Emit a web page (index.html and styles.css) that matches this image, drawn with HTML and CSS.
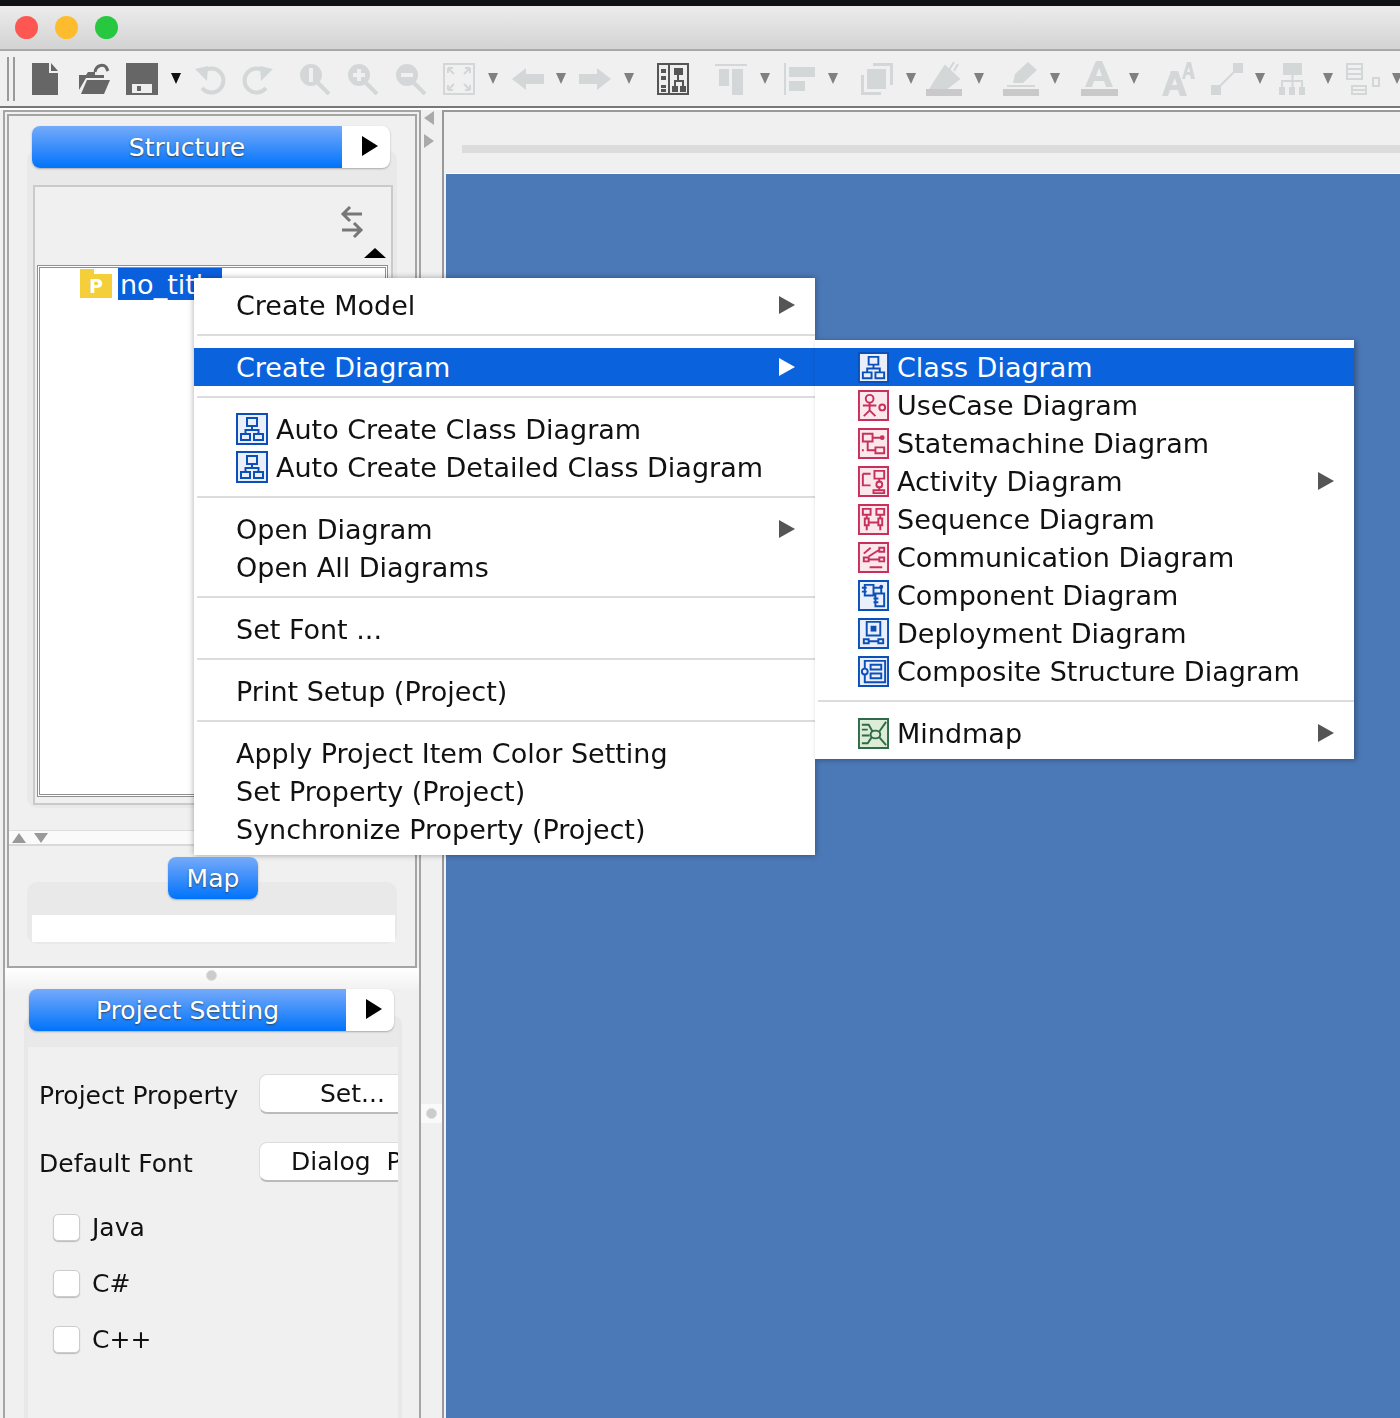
FILE: index.html
```html
<!DOCTYPE html>
<html lang="en">
<head>
    <meta charset="UTF-8">
    <title>astah - no_title</title>
    <link rel="stylesheet" href="styles.css">
</head>
<body>

    <!-- shared icons -->
    <svg class="defs" xmlns="http://www.w3.org/2000/svg">
        <symbol id="i-doc" viewBox="0 0 26 32"><path d="M0 0h17v10h9v22H0zM19 0l7 8h-7z" fill="#666"/></symbol>
        <symbol id="i-open" viewBox="0 0 32 32"><path d="M1 27V12h7l2-3h7v3h9v3H8zM3 31l6-14h23l-6 14z" fill="#666"/><path d="M17 9c1-7 8-8 11-5l2 4" fill="none" stroke="#666" stroke-width="3"/></symbol>
        <symbol id="i-save" viewBox="0 0 32 32"><path d="M0 0h32v32H0z" fill="#666"/><path d="M6 21h20v9H6z" fill="#eee"/><path d="M11 23h4v5h-4z" fill="#666"/></symbol>
        <symbol id="i-undo" viewBox="0 0 32 32"><path d="M9 9a12 12 0 1 1-1 16" fill="none" stroke="#d3d7d7" stroke-width="4"/><path d="M1 6l13-3-1 15z" fill="#d3d7d7"/></symbol>
        <symbol id="i-redo" viewBox="0 0 32 32"><path d="M23 9a12 12 0 1 0 1 16" fill="none" stroke="#d3d7d7" stroke-width="4"/><path d="M31 6L18 3l1 15z" fill="#d3d7d7"/></symbol>
        <symbol id="i-zoom1" viewBox="0 0 32 32"><circle cx="12" cy="12" r="11" fill="#d3d7d7"/><path d="M19 20l11 11" stroke="#d3d7d7" stroke-width="4"/><path d="M10 5h4v14h-4z" fill="#f0f0f0"/></symbol>
        <symbol id="i-zoom2" viewBox="0 0 32 32"><circle cx="12" cy="12" r="11" fill="#d3d7d7"/><path d="M19 20l11 11" stroke="#d3d7d7" stroke-width="4"/><path d="M10 6h4v4h4v4h-4v4h-4v-4H6v-4h4z" fill="#f0f0f0"/></symbol>
        <symbol id="i-zoom3" viewBox="0 0 32 32"><circle cx="12" cy="12" r="11" fill="#d3d7d7"/><path d="M19 20l11 11" stroke="#d3d7d7" stroke-width="4"/><path d="M6 10h12v4H6z" fill="#f0f0f0"/></symbol>
        <symbol id="i-fit" viewBox="0 0 32 32"><path d="M1 1h30v30H1z" fill="none" stroke="#d3d7d7" stroke-width="2"/><path d="M5 5l6 6M5 5v5M5 5h5M27 5l-6 6M27 5v5M27 5h-5M5 27l6-6M5 27v-5M5 27h5M27 27l-6-6M27 27v-5M27 27h-5" stroke="#d3d7d7" stroke-width="2" fill="none"/></symbol>
        <symbol id="i-back" viewBox="0 0 32 22"><path d="M0 11L14 0v6h18v10H14v6z" fill="#d3d7d7"/></symbol>
        <symbol id="i-fwd" viewBox="0 0 32 22"><path d="M32 11L18 0v6H0v10h18v6z" fill="#d3d7d7"/></symbol>
        <symbol id="i-map" viewBox="0 0 32 32"><path d="M1 1h30v30H1z" fill="#eee" stroke="#555" stroke-width="2"/><path d="M12 2v28" stroke="#555" stroke-width="2"/><path d="M4 6h5v4H4zM4 13h5v4H4zM4 22h5v3H4zM4 26h5v3H4zM17 5h9v7h-9zM15 23h6v6h-6zM23 23h6v6h-6z" fill="#555"/><path d="M21 12v6M18 23v-5h8v5" fill="none" stroke="#555" stroke-width="2"/></symbol>
        <symbol id="i-atop" viewBox="0 0 32 32"><path d="M0 1h32v2H0zM4 6h10v17H4zM17 6h11v26H17z" fill="#d3d7d7"/></symbol>
        <symbol id="i-aleft" viewBox="0 0 32 32"><path d="M0 0h2v32H0zM5 4h26v10H5zM5 18h16v10H5z" fill="#d3d7d7"/></symbol>
        <symbol id="i-layers" viewBox="0 0 32 32"><path d="M12 0h20v22h-3V3H12zM6 6h19v20H6zM0 12h3v17h17v3H0z" fill="#d3d7d7"/></symbol>
        <symbol id="i-fill" viewBox="0 0 38 36"><path d="M1 28h36v7H1z" fill="#c9c9c9"/><path d="M9 22L20 5l14 13-12 9H6zM24 9l5-8M29 10l4-7" fill="#d3d7d7" stroke="#d3d7d7" stroke-width="2"/></symbol>
        <symbol id="i-pen" viewBox="0 0 38 36"><path d="M1 28h36v7H1z" fill="#c9c9c9"/><path d="M5 25h28" stroke="#d3d7d7" stroke-width="2"/><path d="M11 22l2-9L26 1l9 8-14 13z" fill="#d3d7d7"/></symbol>
        <symbol id="i-a" viewBox="0 0 38 36"><path d="M1 28h37v7H1z" fill="#c9c9c9"/><path d="M5 26L16 0h6l11 26h-7l-2-6H14l-2 6zM16 15h6l-3-8z" fill="#d3d7d7" fill-rule="evenodd"/></symbol>
        <symbol id="i-aa" viewBox="0 0 33 34"><path d="M0 34L9 9h7l9 25h-7l-2-6H8l-2 6zM10 23h5l-2-7z" fill="#d3d7d7" fill-rule="evenodd"/><path d="M20 17L25 0h4l4 17h-4l-1-4h-4l-1 4zM25 10h3l-1-5z" fill="#d3d7d7" fill-rule="evenodd"/></symbol>
        <symbol id="i-line" viewBox="0 0 32 32"><path d="M22 0h10v10H22zM0 22h10v10H0z" fill="#d3d7d7"/><path d="M8 24L24 8" stroke="#d3d7d7" stroke-width="2"/></symbol>
        <symbol id="i-tree" viewBox="0 0 28 32"><path d="M4 0h19v12H4zM0 24h6v8H0zM10 24h6v8h-6zM20 24h6v8h-6z" fill="#d3d7d7"/><path d="M13.500 12v12M3 24v-6h20v6" fill="none" stroke="#d3d7d7" stroke-width="2"/></symbol>
        <symbol id="i-boxes" viewBox="0 0 34 32"><path d="M1 1h15v15H1zM6 23h14v8H6zM27 15h6v8h-6z" fill="none" stroke="#d3d7d7" stroke-width="2"/><path d="M1 6h15M1 11h15M6 27h14" stroke="#d3d7d7" stroke-width="2"/></symbol>
        <symbol id="i-swap" viewBox="0 0 24 32"><path d="M22 8H3M10 1L3 8l7 7M2 24h19M14 17l7 7-7 7" fill="none" stroke="#777" stroke-width="3"/></symbol>

        <symbol id="d-class" viewBox="0 0 32 32"><path d="M1 1h30v30H1z" fill="#e9f0fb" stroke="#0d4fb8" stroke-width="2"/><path d="M11 5h10v8H11zM5 21h9v6H5zM18 21h9v6h-9zM16 13v4M9.500 21v-4h13v4" fill="none" stroke="#0d4fb8" stroke-width="2"/></symbol>
        <symbol id="d-usecase" viewBox="0 0 32 32"><path d="M1 1h30v30H1z" fill="#fbe8ed" stroke="#c8305c" stroke-width="2"/><circle cx="12" cy="9" r="4" fill="none" stroke="#c8305c" stroke-width="2"/><path d="M12 13v8M5 16h14M12 21l-6 6M12 21l6 6" fill="none" stroke="#c8305c" stroke-width="2"/><circle cx="25" cy="18" r="3" fill="none" stroke="#c8305c" stroke-width="2"/></symbol>
        <symbol id="d-state" viewBox="0 0 32 32"><path d="M1 1h30v30H1z" fill="#fbe8ed" stroke="#c8305c" stroke-width="2"/><path d="M5 6h10v8H5zM18 20h9v6h-9zM15 10h10M10 14v9h8M4 23h2" fill="none" stroke="#c8305c" stroke-width="2"/><circle cx="25" cy="10" r="2.500" fill="#c8305c"/></symbol>
        <symbol id="d-activity" viewBox="0 0 32 32"><path d="M1 1h30v30H1z" fill="#fbe8ed" stroke="#c8305c" stroke-width="2"/><path d="M5 8h8M5 8v12h8M17 5h10v8H17zM22 13v4M16 25h11v3H16zM22 22v3" fill="none" stroke="#c8305c" stroke-width="2"/><circle cx="22" cy="19" r="3" fill="none" stroke="#c8305c" stroke-width="2"/></symbol>
        <symbol id="d-seq" viewBox="0 0 32 32"><path d="M1 1h30v30H1z" fill="#fbe8ed" stroke="#c8305c" stroke-width="2"/><path d="M5 5h8v6H5zM19 5h8v6h-8zM9 11v16M23 11v16M9 19h14" fill="none" stroke="#c8305c" stroke-width="2"/><path d="M7 15h4v7H7zM21 15h4v7h-4z" fill="#fbe8ed" stroke="#c8305c" stroke-width="2"/></symbol>
        <symbol id="d-comm" viewBox="0 0 32 32"><path d="M1 1h30v30H1z" fill="#fbe8ed" stroke="#c8305c" stroke-width="2"/><path d="M6 16h5v4H6zM22 6h5v4h-5zM22 16h5v4h-5zM11 15l11-7M11 18h11M12 26h13M6 12l7-6" fill="none" stroke="#c8305c" stroke-width="2"/></symbol>
        <symbol id="d-comp" viewBox="0 0 32 32"><path d="M1 1h30v30H1z" fill="#e9f0fb" stroke="#0d4fb8" stroke-width="2"/><path d="M7 5h9v11H7zM18 14h9v13h-9zM4 8h5M4 12h5M16 23h5M16 19h5M16 8h8v6" fill="none" stroke="#0d4fb8" stroke-width="2"/><circle cx="24" cy="7" r="2" fill="#0d4fb8"/></symbol>
        <symbol id="d-deploy" viewBox="0 0 32 32"><path d="M1 1h30v30H1z" fill="#e9f0fb" stroke="#0d4fb8" stroke-width="2"/><path d="M9 4h14v14H9zM6 22h5v4H6zM21 22h5v4h-5zM11 24h10" fill="none" stroke="#0d4fb8" stroke-width="2"/><path d="M13 8h6v6h-6z" fill="#0d4fb8"/></symbol>
        <symbol id="d-composite" viewBox="0 0 32 32"><path d="M1 1h30v30H1z" fill="#e9f0fb" stroke="#0d4fb8" stroke-width="2"/><path d="M7 5h21v22H7zM13 9h11v5H13zM13 18h11v5H13z" fill="none" stroke="#0d4fb8" stroke-width="2"/><circle cx="7" cy="16" r="3" fill="#e9f0fb" stroke="#0d4fb8" stroke-width="2"/></symbol>
        <symbol id="d-mind" viewBox="0 0 32 32"><path d="M1 1h30v30H1z" fill="#dcecd5" stroke="#2f6b4a" stroke-width="2"/><ellipse cx="18" cy="17" rx="5" ry="4" fill="#dcecd5" stroke="#2f6b4a" stroke-width="2"/><path d="M4 7h7l4 7M4 12h6M4 26h6l4-6M22 14l7-10M22 20l7 8M4 18h8" fill="none" stroke="#2f6b4a" stroke-width="2"/></symbol>
    </svg>

    <div class="top-edge"></div>

    <!-- window title bar -->
    <div class="titlebar">
        <span class="light red"></span>
        <span class="light amber"></span>
        <span class="light green"></span>
    </div>

    <!-- toolbar -->
    <div class="toolbar">
        <span class="grip"></span>
        <svg class="ic w26 m17"><use href="#i-doc"/></svg>
        <svg class="ic m20"><use href="#i-open"/></svg>
        <svg class="ic m16"><use href="#i-save"/></svg>
        <span class="drop dark m13"></span>
        <svg class="ic m13"><use href="#i-undo"/></svg>
        <svg class="ic m16"><use href="#i-redo"/></svg>
        <svg class="ic m25"><use href="#i-zoom1"/></svg>
        <svg class="ic m16"><use href="#i-zoom2"/></svg>
        <svg class="ic m16"><use href="#i-zoom3"/></svg>
        <svg class="ic m16"><use href="#i-fit"/></svg>
        <span class="drop m13"></span>
        <svg class="ic short m14"><use href="#i-back"/></svg>
        <span class="drop m12"></span>
        <svg class="ic short m13"><use href="#i-fwd"/></svg>
        <span class="drop m13"></span>
        <svg class="ic m23"><use href="#i-map"/></svg>
        <svg class="ic m26"><use href="#i-atop"/></svg>
        <span class="drop m13"></span>
        <svg class="ic m14"><use href="#i-aleft"/></svg>
        <span class="drop m12"></span>
        <svg class="ic m23"><use href="#i-layers"/></svg>
        <span class="drop m13"></span>
        <svg class="ic w38 m9"><use href="#i-fill"/></svg>
        <span class="drop m11"></span>
        <svg class="ic w38 m18"><use href="#i-pen"/></svg>
        <span class="drop m10"></span>
        <svg class="ic w38 m20"><use href="#i-a"/></svg>
        <span class="drop m11"></span>
        <svg class="ic w33 m23"><use href="#i-aa"/></svg>
        <svg class="ic m16"><use href="#i-line"/></svg>
        <span class="drop m12"></span>
        <svg class="ic w28 m14"><use href="#i-tree"/></svg>
        <span class="drop m16"></span>
        <svg class="ic w34 m13"><use href="#i-boxes"/></svg>
        <span class="drop m12"></span>
    </div>
    <div class="toolbar-rule"></div>

    <div class="workspace">

        <!-- left side panes -->
        <div class="side">
            <div class="upper">
                <div class="tab tab-structure">
                    <span class="tab-label">Structure</span>
                    <span class="tab-play"></span>
                </div>
                <div class="group group-structure">
                    <div class="tree-wrap">
                        <div class="tree-head">
                            <svg class="swap"><use href="#i-swap"/></svg>
                            <span class="collapse"></span>
                        </div>
                        <div class="tree">
                            <div class="tree-row">
                                <span class="pkg"><span class="pkg-tab"></span>P</span>
                                <span class="tree-name">no_title</span>
                            </div>
                        </div>
                    </div>
                </div>
                <div class="split-h">
                    <span class="mini up"></span>
                    <span class="mini down"></span>
                </div>
                <div class="tab tab-map"><span class="tab-label">Map</span></div>
                <div class="group group-map"><div class="map-view"></div></div>
            </div>

            <div class="split-dot"><span class="dot"></span></div>

            <div class="tab tab-project">
                <span class="tab-label">Project Setting</span>
                <span class="tab-play"></span>
            </div>
            <div class="group group-project">
                <div class="prop-row">
                    <span class="prop-label">Project Property</span>
                    <span class="prop-btn btn-set">Set...</span>
                </div>
                <div class="prop-row">
                    <span class="prop-label">Default Font</span>
                    <span class="prop-btn btn-font">Dialog&nbsp;&nbsp;Plain</span>
                </div>
                <label class="check"><span class="box"></span>Java</label>
                <label class="check"><span class="box"></span>C#</label>
                <label class="check"><span class="box"></span>C++</label>
            </div>
        </div>

        <!-- divider between side panes and the diagram -->
        <div class="divider">
            <span class="mini left"></span>
            <span class="mini right"></span>
            <div class="divider-dot"><span class="dot"></span></div>
        </div>

        <!-- diagram editor -->
        <div class="editor">
            <div class="editor-tabs"><div class="tab-track"></div></div>
            <div class="canvas"></div>
        </div>
    </div>

    <!-- context menu -->
    <div class="menu menu-main">
        <div class="item has-sub">Create Model</div>
        <div class="sep"></div>
        <div class="item has-sub active">Create Diagram</div>
        <div class="sep"></div>
        <div class="item with-icon"><svg class="d-ic"><use href="#d-class"/></svg>Auto Create Class Diagram</div>
        <div class="item with-icon"><svg class="d-ic"><use href="#d-class"/></svg>Auto Create Detailed Class Diagram</div>
        <div class="sep"></div>
        <div class="item has-sub">Open Diagram</div>
        <div class="item">Open All Diagrams</div>
        <div class="sep"></div>
        <div class="item">Set Font ...</div>
        <div class="sep"></div>
        <div class="item">Print Setup (Project)</div>
        <div class="sep"></div>
        <div class="item">Apply Project Item Color Setting</div>
        <div class="item">Set Property (Project)</div>
        <div class="item">Synchronize Property (Project)</div>
    </div>

    <!-- Create Diagram submenu -->
    <div class="menu menu-sub">
        <div class="item active"><svg class="d-ic"><use href="#d-class"/></svg>Class Diagram</div>
        <div class="item"><svg class="d-ic"><use href="#d-usecase"/></svg>UseCase Diagram</div>
        <div class="item"><svg class="d-ic"><use href="#d-state"/></svg>Statemachine Diagram</div>
        <div class="item has-sub"><svg class="d-ic"><use href="#d-activity"/></svg>Activity Diagram</div>
        <div class="item"><svg class="d-ic"><use href="#d-seq"/></svg>Sequence Diagram</div>
        <div class="item"><svg class="d-ic"><use href="#d-comm"/></svg>Communication Diagram</div>
        <div class="item"><svg class="d-ic"><use href="#d-comp"/></svg>Component Diagram</div>
        <div class="item"><svg class="d-ic"><use href="#d-deploy"/></svg>Deployment Diagram</div>
        <div class="item"><svg class="d-ic"><use href="#d-composite"/></svg>Composite Structure Diagram</div>
        <div class="sep"></div>
        <div class="item has-sub"><svg class="d-ic"><use href="#d-mind"/></svg>Mindmap</div>
    </div>

</body>
</html>
```

FILE: styles.css
```css
/* whole window */
html, body {
    margin: 0;
    height: 1418px;
    overflow: hidden;
}

body {
    position: relative;
    background-color: #f0f0f0;
    font-family: "DejaVu Sans", sans-serif;
    font-size: 27px;
    color: #111;
    filter: blur(0.4px);
}

.defs {
    display: none;
}

.top-edge {
    height: 6px;
    background-color: #101114;
}

/* title bar with the three window lights */
.titlebar {
    height: 43px;
    display: flex;
    align-items: center;
    gap: 17px;
    padding-left: 15px;
    background: linear-gradient(#ececec, #d3d3d3);
    border-bottom: 2px solid #a8a8a8;
}

.light {
    width: 23px;
    height: 23px;
    border-radius: 50%;
}

.red { background-color: #fd5752; }
.amber { background-color: #fdbc2e; }
.green { background-color: #27c83f; }

/* toolbar */
.toolbar {
    height: 55px;
    display: flex;
    align-items: center;
    padding-left: 7px;
}

.grip {
    width: 4px;
    height: 44px;
    flex: none;
    border-left: 2px solid #9a9a9a;
    border-right: 2px solid #9a9a9a;
}

.ic {
    width: 32px;
    height: 32px;
    flex: none;
}

.ic.short { height: 22px; }
.ic.w26 { width: 26px; }
.ic.w28 { width: 28px; }
.ic.w33 { width: 33px; height: 34px; }
.ic.w34 { width: 34px; }
.ic.w38 { width: 38px; height: 36px; }

.drop {
    width: 0;
    height: 0;
    flex: none;
    border-left: 5px solid transparent;
    border-right: 5px solid transparent;
    border-top: 11px solid #808080;
}

.drop.dark { border-top-color: #111; }

.m9 { margin-left: 9px; }
.m10 { margin-left: 10px; }
.m11 { margin-left: 11px; }
.m12 { margin-left: 12px; }
.m13 { margin-left: 13px; }
.m14 { margin-left: 14px; }
.m16 { margin-left: 16px; }
.m17 { margin-left: 17px; }
.m18 { margin-left: 18px; }
.m20 { margin-left: 20px; }
.m23 { margin-left: 23px; }
.m25 { margin-left: 25px; }
.m26 { margin-left: 26px; }

.toolbar-rule {
    height: 2px;
    background-color: #777;
    border-bottom: 2px solid #fff;
}

.workspace {
    display: flex;
    height: 1308px;
}

/* left side panes */
.side {
    width: 414px;
    margin-left: 3px;
    flex: none;
    border: 2px solid #a5a5a5;
    border-bottom: none;
}

.upper {
    height: 840px;
    margin: 2px 0 0 2px;
    width: 406px;
    padding-top: 10px;
    border: 2px solid #a5a5a5;
    box-sizing: content-box;
}

/* blue pill title with white play part */
.tab {
    position: relative;
    z-index: 1;
    display: flex;
    height: 42px;
    color: #fff;
    font-size: 25px;
    border-radius: 8px;
    box-shadow: 0 1px 2px #aaa;
    overflow: hidden;
    background-color: #fff;
}

.tab-label {
    flex: 1;
    text-align: center;
    line-height: 43px;
    text-shadow: 0 1px 2px #345;
    background: linear-gradient(#75aafa, #0073fb);
}

.tab-play {
    width: 48px;
    position: relative;
}

.tab-play::after {
    content: "";
    position: absolute;
    left: 20px;
    top: 10px;
    border-left: 16px solid #000;
    border-top: 10px solid transparent;
    border-bottom: 10px solid transparent;
}

.tab-structure {
    width: 358px;
    margin-left: 23px;
}

.tab-map {
    width: 90px;
    margin: 11px 0 0 159px;
}

.tab-project {
    width: 365px;
    margin: 0 0 0 24px;
}

/* rounded group boxes under each tab */
.group {
    background-color: #e9e9e9;
    border-radius: 10px;
}

.group-structure {
    width: 370px;
    height: 658px;
    margin: -18px 0 0 18px;
    padding-top: 35px;
    box-sizing: border-box;
}

.tree-wrap {
    margin-left: 6px;
    width: 360px;
    height: 620px;
    box-sizing: border-box;
    border: 2px solid #cacaca;
    background-color: #f0f0f0;
}

.tree-head {
    position: relative;
    height: 78px;
}

.swap {
    position: absolute;
    left: 305px;
    top: 19px;
    width: 24px;
    height: 32px;
}

.collapse {
    position: absolute;
    left: 329px;
    top: 61px;
    border-bottom: 10px solid #000;
    border-left: 11px solid transparent;
    border-right: 11px solid transparent;
}

.tree {
    margin-left: 2px;
    width: 351px;
    height: 532px;
    box-sizing: border-box;
    background-color: #fff;
    border: 3px double #8f8f8f;
}

.tree-row {
    display: flex;
    align-items: center;
    margin: 0 0 0 40px;
    gap: 6px;
}

.pkg {
    position: relative;
    width: 32px;
    height: 24px;
    margin-top: 4px;
    background-color: #f4cf3a;
    color: #fff;
    font-size: 19px;
    line-height: 25px;
    text-align: center;
    font-weight: bold;
}

.pkg-tab {
    position: absolute;
    left: 0;
    top: -5px;
    width: 14px;
    height: 5px;
    background-color: #f4cf3a;
}

.tree-name {
    padding: 0 2px;
    height: 32px;
    line-height: 34px;
    color: #fff;
    background-color: #0a5fdd;
}

/* thin splitters */
.split-h {
    display: flex;
    align-items: center;
    gap: 8px;
    height: 16px;
    margin-top: 22px;
    background-color: #fafafa;
    border-top: 1px solid #ddd;
    border-bottom: 2px solid #d8d8d8;
    box-sizing: border-box;
}

.mini {
    width: 0;
    height: 0;
    flex: none;
}

.mini.up {
    margin-left: 3px;
    border-bottom: 10px solid #999;
    border-left: 7px solid transparent;
    border-right: 7px solid transparent;
}

.mini.down {
    border-top: 10px solid #999;
    border-left: 7px solid transparent;
    border-right: 7px solid transparent;
}

.mini.left {
    border-right: 10px solid #aaa;
    border-top: 7px solid transparent;
    border-bottom: 7px solid transparent;
}

.mini.right {
    border-left: 10px solid #aaa;
    border-top: 7px solid transparent;
    border-bottom: 7px solid transparent;
}

.group-map {
    width: 370px;
    height: 62px;
    margin: -17px 0 0 18px;
    padding-top: 33px;
    box-sizing: border-box;
}

.map-view {
    margin-left: 5px;
    width: 363px;
    height: 27px;
    background-color: #fff;
}

.split-dot {
    height: 21px;
    display: flex;
    justify-content: center;
    padding-right: 2px;
    padding-top: 2px;
    box-sizing: border-box;
    background: linear-gradient(#fff, #f2f2f2);
}

.dot {
    width: 11px;
    height: 11px;
    border-radius: 50%;
    background-color: #ccc;
    border: 1px solid #ddd;
    box-sizing: border-box;
}

/* Project Setting */
.group-project {
    width: 378px;
    height: 420px;
    margin: -16px 0 0 19px;
    padding: 59px 0 0 11px;
    box-sizing: border-box;
    background: linear-gradient(#e9e9e9 32px, #f0f0f0 32px);
    border-left: 4px solid #e8e8e8;
    border-right: 4px solid #e8e8e8;
    border-radius: 10px 10px 0 0;
    overflow: hidden;
    font-size: 25px;
}

.prop-row {
    display: flex;
    align-items: center;
    height: 40px;
    margin-bottom: 28px;
}

.prop-label {
    width: 220px;
    flex: none;
    padding-top: 3px;
}

.prop-btn {
    flex: none;
    width: 160px;
    height: 40px;
    line-height: 38px;
    background-color: #fff;
    border: 1px solid #ddd;
    border-bottom: 2px solid #bbb;
    border-radius: 8px;
    box-sizing: border-box;
    white-space: nowrap;
}

.btn-set { padding-left: 60px; }
.btn-font { padding-left: 31px; }

.check {
    display: flex;
    align-items: center;
    height: 28px;
    margin-bottom: 28px;
    margin-left: 14px;
}

.prop-row + .check { margin-top: 31px; }

.box {
    width: 27px;
    height: 27px;
    margin-right: 12px;
    background-color: #fff;
    border: 1px solid #ccc;
    border-radius: 5px;
    box-sizing: border-box;
    box-shadow: 0 1px 1px #bbb;
}

/* divider */
.divider {
    width: 21px;
    flex: none;
    display: flex;
    flex-direction: column;
    gap: 9px;
    padding: 1px 0 0 3px;
    box-sizing: border-box;
}

.divider-dot {
    margin: 947px 0 0 -3px;
    height: 19px;
    display: flex;
    justify-content: center;
    align-items: center;
    background-color: #fafafa;
}

/* editor */
.editor {
    flex: 1;
    border-left: 2px solid #999;
    border-top: 2px solid #999;
}

.editor-tabs {
    height: 61px;
    padding: 33px 0 0 18px;
    box-sizing: border-box;
}

.tab-track {
    height: 8px;
    background-color: #dcdcdc;
}

.canvas {
    height: 1250px;
    background-color: #4b78b6;
    border-top: 1px solid #fff;
    margin-left: 2px;
}

/* popup menus */
.menu {
    position: absolute;
    background-color: #fff;
    box-sizing: border-box;
    white-space: nowrap;
}

.menu-main {
    left: 194px;
    top: 278px;
    width: 621px;
    height: 577px;
    padding-top: 8px;
    box-shadow: 0 0 6px rgba(0, 0, 0, 0.35);
}

.menu-sub {
    left: 815px;
    top: 340px;
    width: 539px;
    height: 419px;
    padding-top: 8px;
    box-shadow: 2px 1px 5px rgba(0, 0, 0, 0.3);
}

.item {
    position: relative;
    display: flex;
    align-items: center;
    height: 38px;
    padding-left: 42px;
}

.menu-sub .item { padding-left: 43px; }

.item.active {
    color: #fff;
    background-color: #0a63dc;
}

.item.has-sub::after {
    content: "";
    position: absolute;
    right: 20px;
    top: 10px;
    border-left: 16px solid #555;
    border-top: 9px solid transparent;
    border-bottom: 9px solid transparent;
}

.item.active.has-sub::after { border-left-color: #fff; }

.d-ic {
    width: 32px;
    height: 32px;
    margin-right: 8px;
    flex: none;
}

.menu-sub .d-ic { width: 31px; height: 31px; }

.sep {
    height: 24px;
    margin-left: 3px;
    box-sizing: border-box;
    padding-top: 10px;
}

.sep::after {
    content: "";
    display: block;
    height: 2px;
    background-color: #dcdcdc;
}
```
